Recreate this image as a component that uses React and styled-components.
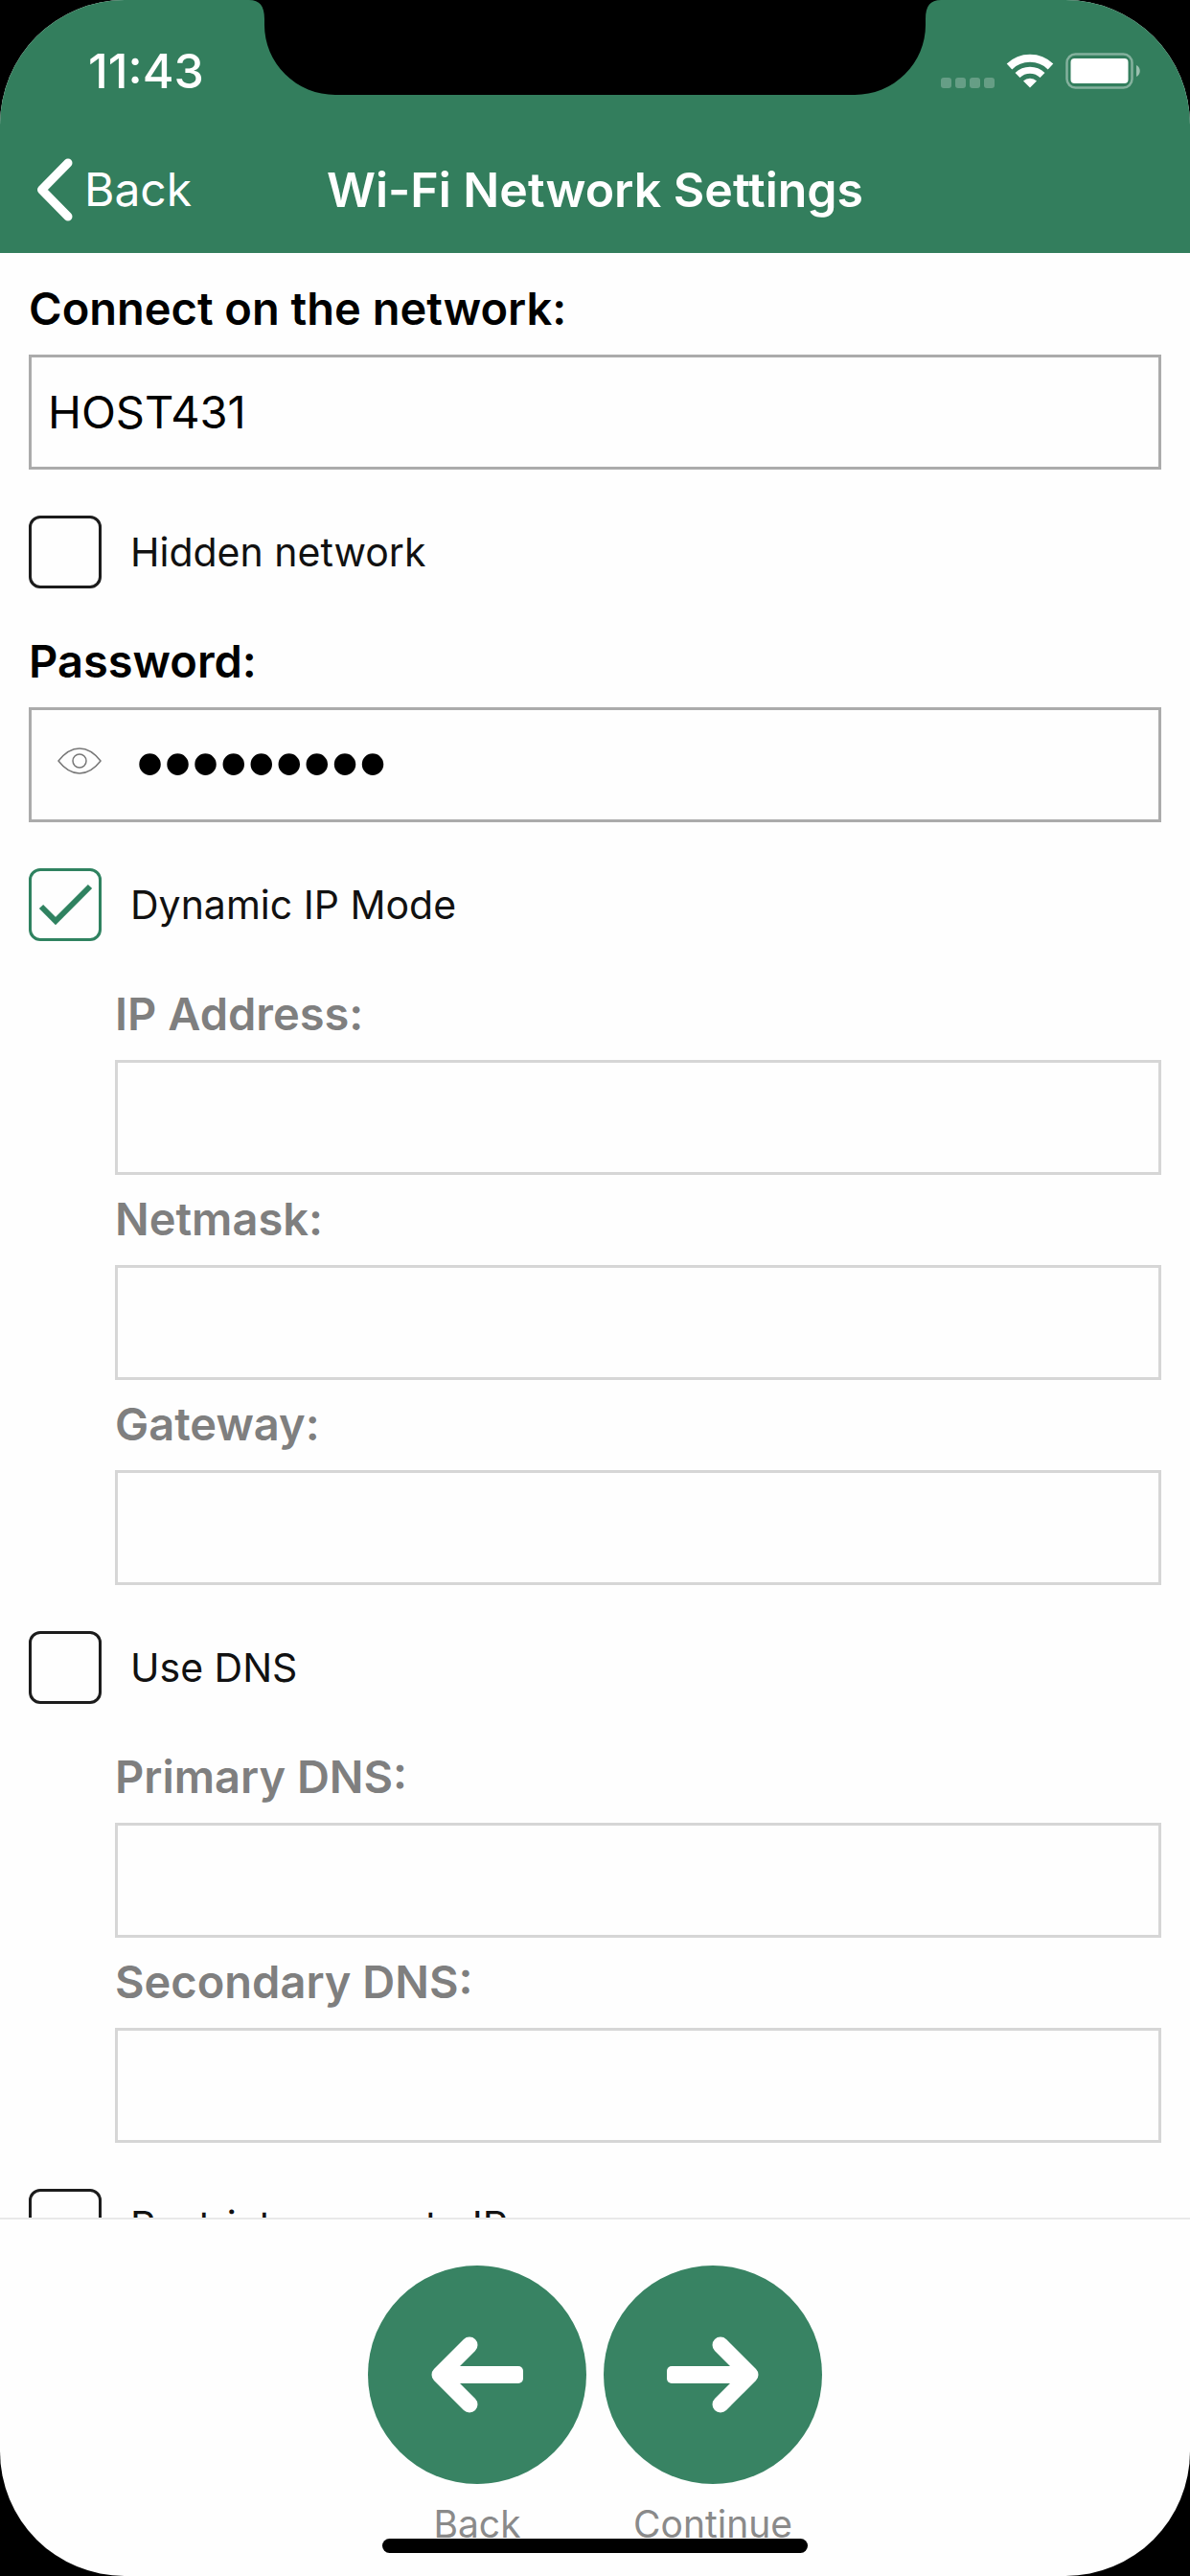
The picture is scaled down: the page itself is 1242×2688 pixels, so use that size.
import React, { useState } from "react";
import styled, { createGlobalStyle } from "styled-components";

const GlobalStyle = createGlobalStyle`
  * {
    box-sizing: border-box;
  }
  body {
    margin: 0;
    background: #000;
    font-family: Inter, Roboto, "Liberation Sans", sans-serif;
  }
  button {
    padding: 0;
    border: none;
    background: none;
    font-family: inherit;
    cursor: pointer;
  }
`;

const Screen = styled.div`
  position: relative;
  display: flex;
  flex-direction: column;
  height: 100vh;
  overflow: hidden;
  border-radius: 130px;
  background: #fefefe;
`;

const Header = styled.header`
  flex: none;
  color: white;
  background: #337e5d;
`;

const Notch = styled.svg`
  position: absolute;
  top: 0;
  left: 0;
  right: 0;
  margin: 0 auto;
  width: 722px;
  height: 99px;
`;

const StatusBar = styled.div`
  display: flex;
  justify-content: space-between;
  align-items: center;
  padding: 44px 50px 28px 92px;
`;

const Time = styled.span`
  font-size: 50px;
  line-height: 60px;
  font-weight: 500;
`;

const StatusIcons = styled.div`
  display: flex;
  align-items: center;
  gap: 12px;
`;

const NavBar = styled.nav`
  display: grid;
  grid-template-columns: 1fr auto 1fr;
  align-items: center;
  height: 132px;
  padding: 0 36px;
`;

const NavBack = styled.button`
  display: flex;
  align-items: center;
  justify-self: start;
  gap: 10px;
  color: white;
  font-size: 48px;
  line-height: 60px;
`;

const Title = styled.h1`
  margin: 0;
  font-size: 50px;
  line-height: 60px;
  font-weight: 600;
`;

const Form = styled.form`
  flex: 1;
  min-height: 0;
  overflow: hidden;
  padding: 12px 30px 0;
`;

const Group = styled.div`
  padding-left: 90px;
`;

const FieldLabel = styled.label`
  display: block;
  padding: 16px 0 18px;
  font-size: 47px;
  line-height: 60px;
  font-weight: 600;
  color: ${(props) => (props.$disabled ? "#7f7f7f" : "#000")};
`;

const FieldBox = styled.div`
  display: flex;
  align-items: center;
  height: 120px;
  padding: 0 17px;
  border: 3px solid ${(props) => (props.$disabled ? "#d6d6d6" : "#ababab")};
`;

const FieldInput = styled.input`
  flex: 1;
  min-width: 0;
  height: 100%;
  padding: 0 0 2px;
  border: none;
  outline: none;
  background: transparent;
  color: #000;
  font-family: inherit;
  font-size: 47px;

  /* bigger, rounder bullets while the password is masked */
  &[type="password"] {
    font-family: "Liberation Sans", sans-serif;
    font-size: 83px;
  }
`;

const EyeButton = styled.button`
  display: flex;
  padding: 0 36px 8px 10px;
`;

const CheckRow = styled.label`
  display: flex;
  align-items: center;
  gap: 30px;
  padding: 48px 0 30px;
  font-size: 41px;
  line-height: 60px;
  color: #111;
`;

const CheckInput = styled.input`
  appearance: none;
  flex: none;
  width: 76px;
  height: 76px;
  margin: 0;
  border: 3px solid #1c1c1c;
  border-radius: 12px;

  &:checked {
    border-color: #2f8260;
  }
`;

const CheckHolder = styled.span`
  position: relative;
  display: flex;

  svg {
    position: absolute;
    inset: 0;
    pointer-events: none;
  }
`;

const Footer = styled.footer`
  position: relative;
  flex: none;
  display: flex;
  justify-content: center;
  gap: 18px;
  height: 374px;
  padding-top: 48px;
  border-top: 2px solid #e9e9e9;
`;

const ActionButton = styled.button`
  display: flex;
  flex-direction: column;
  align-items: center;
  align-self: flex-start;
  gap: 18px;
  width: 228px;
  color: #8a8a8a;
  font-size: 39px;
  line-height: 48px;
`;

const HomeBar = styled.div`
  position: absolute;
  left: 0;
  right: 0;
  bottom: 24px;
  width: 444px;
  height: 15px;
  margin: 0 auto;
  border-radius: 8px;
  background: #000;
`;

const SignalIcon = () => (
  <svg width="56" height="36" viewBox="0 0 56 36" fill="#fff" opacity="0.25">
    <rect x="0" y="25" width="11" height="11" rx="3" />
    <rect x="15" y="25" width="11" height="11" rx="3" />
    <rect x="30" y="25" width="11" height="11" rx="3" />
    <rect x="45" y="25" width="11" height="11" rx="3" />
  </svg>
);

const WifiIcon = () => (
  <svg width="50" height="36" viewBox="0 0 50 36" fill="none">
    <path d="M3.5 13.5a31 31 0 0 1 43 0" stroke="#fff" strokeWidth="8" />
    <path d="M12 22.500a18.500 18.500 0 0 1 26 0" stroke="#fff" strokeWidth="7" />
    <path d="M25 35.500 18 28.500a10 10 0 0 1 14 0z" fill="#fff" />
  </svg>
);

const BatteryIcon = () => (
  <svg width="80" height="38" viewBox="0 0 80 38" fill="none">
    <rect
      x="1.5"
      y="1.5"
      width="68"
      height="35"
      rx="9"
      stroke="#fff"
      strokeOpacity="0.4"
      strokeWidth="2.5"
    />
    <rect x="5.5" y="6" width="60" height="26" rx="4" fill="#fff" />
    <path d="M74 13c5 2 5 10 0 12z" fill="#fff" fillOpacity="0.5" />
  </svg>
);

const ChevronIcon = () => (
  <svg width="42" height="66" viewBox="0 0 42 66" fill="none">
    <path
      d="M35 5 7.5 33 35 61"
      stroke="#fff"
      strokeWidth="9"
      strokeLinecap="round"
      strokeLinejoin="round"
    />
  </svg>
);

const EyeIcon = () => (
  <svg width="46" height="28" viewBox="0 0 46 28" fill="none" stroke="#777">
    <path
      d="M1 14C8 5 15 1 23 1s15 4 22 13c-7 9-14 13-22 13S8 23 1 14z"
      strokeWidth="1.5"
    />
    <circle cx="23" cy="14" r="7" strokeWidth="1.5" />
  </svg>
);

const CheckIcon = () => (
  <svg width="76" height="76" viewBox="0 0 76 76" fill="none">
    <path d="M13 40 28 55 64 19" stroke="#2f8260" strokeWidth="6" />
  </svg>
);

const CircleArrow = ({ right }) => (
  <svg width="228" height="228" viewBox="0 0 228 228">
    <circle cx="114" cy="114" r="114" fill="#388363" />
    <g transform={right ? "rotate(180 114 114)" : undefined}>
      <path
        d="M106 83 75 114 106 145"
        fill="none"
        stroke="#fff"
        strokeWidth="17"
        strokeLinecap="round"
        strokeLinejoin="round"
      />
      <rect x="76" y="105" width="86" height="18" rx="5" fill="#fff" />
    </g>
  </svg>
);

const Field = ({ id, label, disabled }) => (
  <>
    <FieldLabel htmlFor={id} $disabled={disabled}>
      {label}
    </FieldLabel>
    <FieldBox $disabled={disabled}>
      <FieldInput id={id} type="text" disabled={disabled} />
    </FieldBox>
  </>
);

const Check = ({ label, checked, onChange }) => (
  <CheckRow>
    <CheckHolder>
      <CheckInput
        type="checkbox"
        checked={checked}
        onChange={(e) => onChange(e.target.checked)}
      />
      {checked ? <CheckIcon /> : ""}
    </CheckHolder>
    {label}
  </CheckRow>
);

const App = () => {
  const [network, setNetwork] = useState("HOST431");
  const [password, setPassword] = useState("host43100");
  const [showPassword, setShowPassword] = useState(false);
  const [hidden, setHidden] = useState(false);
  const [dynamicIp, setDynamicIp] = useState(true);
  const [useDns, setUseDns] = useState(false);
  const [restrict, setRestrict] = useState(false);

  return (
    <>
      <GlobalStyle />
      <Screen>
        <Header>
          <StatusBar>
            <Time>11:43</Time>
            <StatusIcons>
              <SignalIcon />
              <WifiIcon />
              <BatteryIcon />
            </StatusIcons>
          </StatusBar>
          <NavBar>
            <NavBack type="button">
              <ChevronIcon />
              Back
            </NavBack>
            <Title>Wi-Fi Network Settings</Title>
          </NavBar>
          <Notch viewBox="0 0 722 99">
            <path d="M0 0C11 0 16 6 16 20V26A74 73 0 0 0 90 99H632A74 73 0 0 0 706 26V20C706 6 711 0 722 0Z" />
          </Notch>
        </Header>

        <Form>
          <FieldLabel htmlFor="network">Connect on the network:</FieldLabel>
          <FieldBox>
            <FieldInput
              id="network"
              type="text"
              value={network}
              onChange={(e) => setNetwork(e.target.value)}
            />
          </FieldBox>
          <Check label="Hidden network" checked={hidden} onChange={setHidden} />

          <FieldLabel htmlFor="password">Password:</FieldLabel>
          <FieldBox>
            <EyeButton
              type="button"
              aria-label="Show password"
              onClick={() => setShowPassword(!showPassword)}
            >
              <EyeIcon />
            </EyeButton>
            <FieldInput
              id="password"
              type={showPassword ? "text" : "password"}
              value={password}
              onChange={(e) => setPassword(e.target.value)}
            />
          </FieldBox>

          <Check
            label="Dynamic IP Mode"
            checked={dynamicIp}
            onChange={setDynamicIp}
          />
          <Group>
            <Field id="ip" label="IP Address:" disabled={dynamicIp} />
            <Field id="netmask" label="Netmask:" disabled={dynamicIp} />
            <Field id="gateway" label="Gateway:" disabled={dynamicIp} />
          </Group>

          <Check label="Use DNS" checked={useDns} onChange={setUseDns} />
          <Group>
            <Field id="dns1" label="Primary DNS:" disabled={!useDns} />
            <Field id="dns2" label="Secondary DNS:" disabled={!useDns} />
          </Group>

          <Check
            label="Restrict access to IP"
            checked={restrict}
            onChange={setRestrict}
          />
        </Form>

        <Footer>
          <ActionButton type="button">
            <CircleArrow />
            Back
          </ActionButton>
          <ActionButton type="button">
            <CircleArrow right />
            Continue
          </ActionButton>
          <HomeBar />
        </Footer>
      </Screen>
    </>
  );
};

export default App;
